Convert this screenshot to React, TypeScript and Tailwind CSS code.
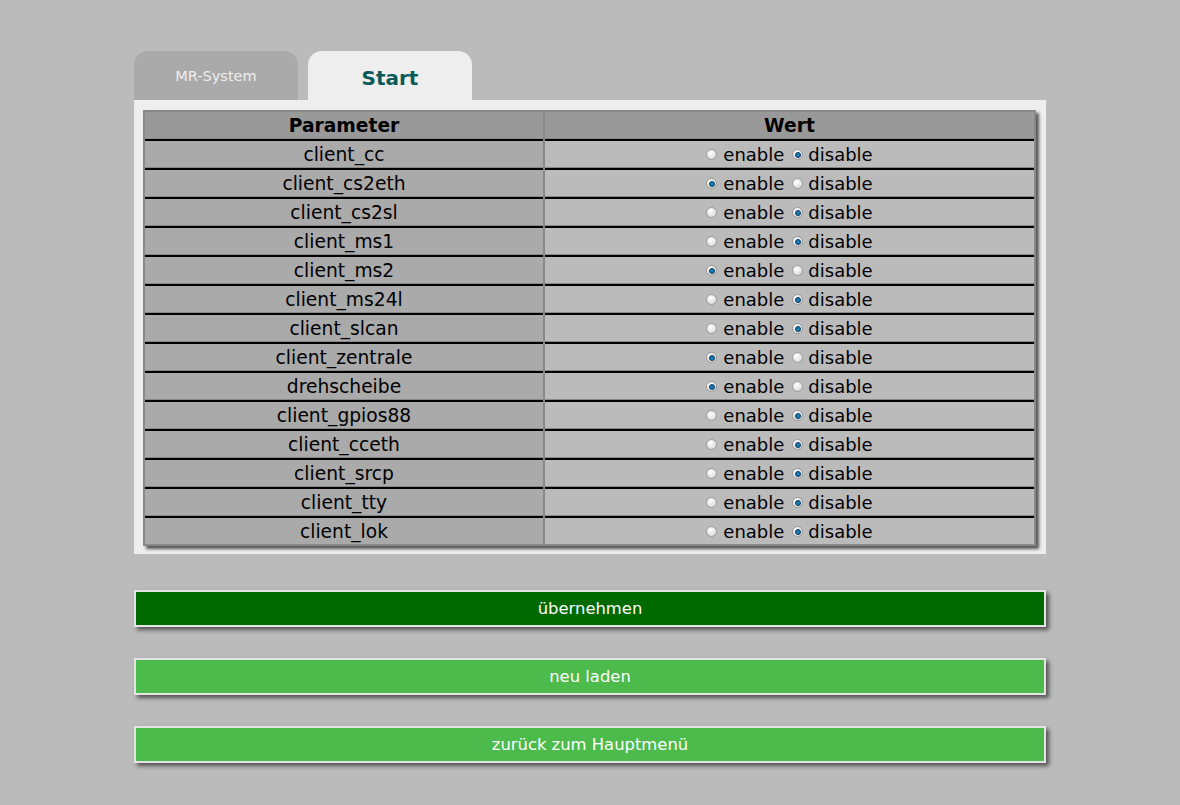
import React, { useState } from "react";

const rows: [string, boolean][] = [
    ["client_cc", false],
    ["client_cs2eth", true],
    ["client_cs2sl", false],
    ["client_ms1", false],
    ["client_ms2", true],
    ["client_ms24l", false],
    ["client_slcan", false],
    ["client_zentrale", true],
    ["drehscheibe", true],
    ["client_gpios88", false],
    ["client_cceth", false],
    ["client_srcp", false],
    ["client_tty", false],
    ["client_lok", false],
];

const Radio = (props: { checked: boolean; onClick: () => void }) => (
    <span
        onClick={props.onClick}
        className="inline-flex items-center justify-center w-[11px] h-[11px] rounded-full border border-[#9a9a9a] bg-[radial-gradient(circle_at_40%_35%,#ffffff,#d0d0d0)] cursor-pointer"
    >
        {props.checked ? (
            <span className="block w-[6px] h-[6px] rounded-full bg-[#1a7ab8] border border-[#0b3c5c]" />
        ) : null}
    </span>
);

const App = () => {
    const [state, setState] = useState<boolean[]>(rows.map((r) => r[1]));

    const setRow = (i: number, v: boolean) => {
        const next = [...state];
        next[i] = v;
        setState(next);
    };

    return (
        <div className="min-h-[805px] w-full bg-[#bbbbbb] font-['DejaVu_Sans',sans-serif] pt-[51px]">
            <div className="w-[912px] mx-auto">
                {/* tabs */}
                <div className="flex gap-[10px] h-[49px]">
                    <div className="w-[164px] bg-[#aaaaaa] rounded-t-[14px] flex items-center justify-center text-[14.5px] text-[#eeeeee] pt-[3px]">
                        MR-System
                    </div>
                    <div className="w-[164px] bg-[#eeeeee] rounded-t-[14px] flex items-center justify-center text-[20px] font-bold text-[#0b5a5a] pt-[4px]">
                        Start
                    </div>
                </div>

                {/* panel */}
                <div className="bg-[#eeeeee] pt-[10px] pl-[9px] pr-[10px] pb-[8px]">
                    <div className="border-2 border-[#888888] shadow-[3px_3px_3px_#555555] text-[18.7px] text-black">
                        <div className="flex h-[27px] bg-[#999999] border-b border-[#888888]">
                            <div className="w-[400px] border-r-2 border-[#888888] flex items-center justify-center font-bold pt-[2px]">
                                Parameter
                            </div>
                            <div className="flex-1 flex items-center justify-center font-bold pt-[2px]">Wert</div>
                        </div>
                        {rows.map((r, i) => (
                            <div
                                key={r[0]}
                                className={
                                    i < rows.length - 1
                                        ? "flex h-[29px] border-b border-[#888888]"
                                        : "flex h-[28px]"
                                }
                            >
                                <div className="w-[400px] flex">
                                    <div className="flex-1 bg-[#aaaaaa] border-t-2 border-black flex items-center justify-center pt-[2px]">
                                        {r[0]}
                                    </div>
                                    <div className="w-[2px] bg-[#888888]" />
                                </div>
                                <div className="flex-1 bg-[#bbbbbb] border-t-2 border-black flex items-center justify-center pt-[1px] text-[18px]">
                                    <Radio checked={state[i]} onClick={() => setRow(i, true)} />
                                    <span className="ml-[6px] mr-[8px]">enable</span>
                                    <Radio checked={!state[i]} onClick={() => setRow(i, false)} />
                                    <span className="ml-[5px]">disable</span>
                                </div>
                            </div>
                        ))}
                    </div>
                </div>

                {/* buttons */}
                <div className="flex flex-col gap-[31px] mt-[36px]">
                    <button className="h-[37px] w-full bg-[#006a00] border-2 border-[#e4e4e4] shadow-[3px_3px_4px_#555555] text-white text-[16.4px] pt-[1px]">
                        übernehmen
                    </button>
                    <button className="h-[37px] w-full bg-[#4cbb4c] border-2 border-[#e4e4e4] shadow-[3px_3px_4px_#555555] text-white text-[16.4px] pt-[1px]">
                        neu laden
                    </button>
                    <button className="h-[37px] w-full bg-[#4cbb4c] border-2 border-[#e4e4e4] shadow-[3px_3px_4px_#555555] text-white text-[16.4px] pt-[1px]">
                        zurück zum Hauptmenü
                    </button>
                </div>
            </div>
        </div>
    );
};

export default App;
